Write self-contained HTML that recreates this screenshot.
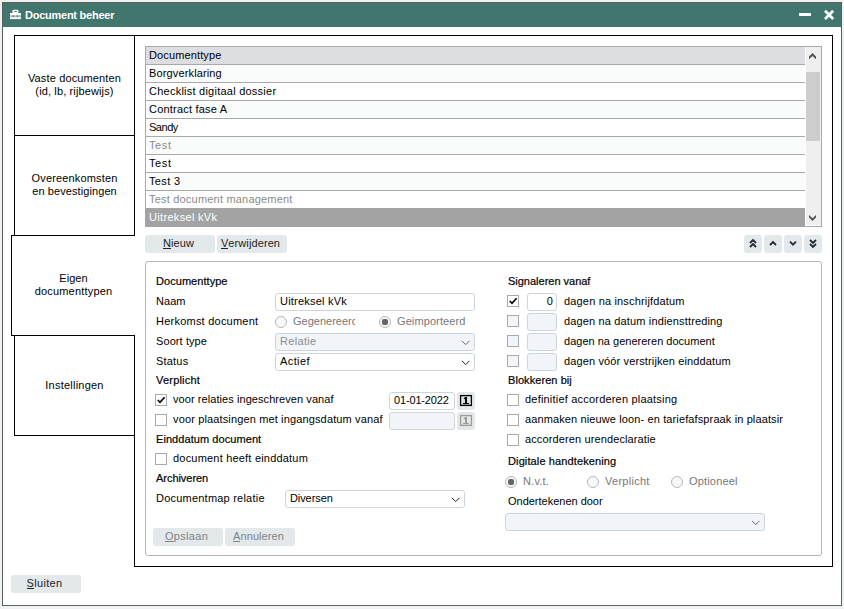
<!DOCTYPE html>
<html><head><meta charset="utf-8">
<style>
*{box-sizing:border-box;margin:0;padding:0}
html,body{width:844px;height:609px;overflow:hidden;background:#eef2f3}
body{position:relative;font-family:"Liberation Sans",sans-serif;font-size:11px;color:#000;letter-spacing:0.2px}
.a{position:absolute}
#win{left:2px;top:2px;width:840px;height:604px;border:1px solid #5e5e5e;background:#fff}
#title{left:3px;top:3px;width:838px;height:24px;background:#40766e}
#title .t{left:22px;top:5px;color:#fff;font-weight:bold;font-size:11px;letter-spacing:-0.25px;line-height:14px}
.tab{border:1px solid #000;background:#fff;text-align:center;display:flex;align-items:center;justify-content:center;line-height:13px;letter-spacing:0.15px;padding-bottom:2px}
#panel{left:134px;top:35px;width:699px;height:532px;border:1px solid #000}
.grid{left:145px;top:46px;width:677px;height:181px;border:1px solid #a9a9a9;background:#fff}
.row{position:absolute;left:0;width:659px;height:18px;border-bottom:1px solid #a9a9a9;line-height:17px;padding-left:3px;letter-spacing:0.28px}
.btn{position:absolute;background:#e3e8eb;border-radius:3px;height:18px;line-height:17px;text-align:center;color:#222;padding-right:3px}
.btn u{text-decoration:none;border-bottom:1px solid #222;line-height:10px;display:inline-block}
.row.hdr{background:#dcdee2}
.row.alt{background:#fafbfb}
.row.dis{color:#8a8a8a}
.row.sel{background:#a3a3a3;color:#fff;left:-1px;width:660px;height:19px;border-bottom:none;padding-left:4px;line-height:18px}
.sb{left:660px;top:0;width:15px;height:178px;background:#efefef}
.thumb{left:660px;top:25px;width:14px;height:69px;background:#cdcdcd}
.btn svg{display:block;margin-left:0}
.l{line-height:13px;white-space:nowrap}
.h{font-weight:normal;-webkit-text-stroke:0.22px #111;letter-spacing:0.15px}
.g{color:#777}
.cb{width:12px;height:12px;border:1px solid #a9a9a9;background:#fff}
.cb.dis{background:#f1f5f9}
.cb svg{position:absolute;left:0;top:0}
.rd{width:12px;height:12px;border:1px solid #b8b8b8;border-radius:50%;background:#f5f7f9}
.rd .dot{position:absolute;left:2px;top:2px;width:6px;height:6px;border-radius:2px;background:#666}
.inp{height:18px;border:1px solid #cdd5dc;border-radius:3px;background:#fff;padding-left:4px;line-height:14px;white-space:nowrap;overflow:hidden}
.inp.dis{background:#f1f5f9}
.btn.dis{color:#7f8489}
.btn.dis u{border-color:#7f8489}
</style></head><body>
<div class="a" id="win"></div>
<div class="a" id="title">
  <svg class="a" style="left:0;top:0" width="30" height="24" viewBox="0 0 30 24">
    <rect x="9.4" y="6.7" width="6.1" height="3.6" rx="1.2" fill="#fff"></rect>
    <rect x="11.3" y="7.9" width="2.5" height="1.1" rx="0.5" fill="#40766e"></rect>
    <rect x="7" y="10" width="11" height="2.5" fill="#fff"></rect>
    <rect x="7" y="12.5" width="11" height="1.7" fill="#fff" opacity="0.55"></rect>
    <rect x="9.7" y="12.3" width="1.1" height="2" fill="#40766e"></rect>
    <rect x="13.7" y="12.3" width="1.1" height="2" fill="#40766e"></rect>
    <rect x="7" y="14.2" width="11" height="1.9" fill="#fff"></rect>
  </svg>
  <div class="a t">Document beheer</div>
  <div class="a" style="left:796px;top:10px;width:12px;height:3px;background:#fff"></div>
  <svg class="a" style="left:819px;top:5px" width="14" height="14" viewBox="0 0 14 14"><path d="M3 2.8 L11.2 11 M11.2 2.8 L3 11" stroke="#fff" stroke-width="2.7"></path></svg>
</div>

<!-- tabs -->
<div class="a tab" style="left:14px;top:35px;width:121px;height:101px"><div><div style="letter-spacing: 0.14px;">Vaste documenten</div><div style="letter-spacing: 0.13px;">(id, lb, rijbewijs)</div></div></div>
<div class="a tab" style="left:14px;top:135px;width:121px;height:101px"><div><div style="letter-spacing: 0.15px;">Overeenkomsten</div><div style="letter-spacing: 0.09px;">en bevestigingen</div></div></div>
<div class="a" id="panel"></div>
<div class="a tab" style="left:11px;top:235px;width:124px;height:101px;border-right:none"><div><div style="letter-spacing: 0.05px;">Eigen</div><div style="letter-spacing: 0.19px;">documenttypen</div></div></div>
<div class="a tab" style="left:14px;top:335px;width:121px;height:101px;padding-bottom:0"><div><div style="letter-spacing: 0.23px;">Instellingen</div></div></div>
<!-- grid -->
<div class="a grid">
<div class="row hdr" style="top: 0px; letter-spacing: 0.13px;">Documenttype</div>
<div class="row alt" style="top: 18px; letter-spacing: 0.14px;">Borgverklaring</div>
<div class="row" style="top: 36px; letter-spacing: 0.24px;">Checklist digitaal dossier</div>
<div class="row alt" style="top: 54px; letter-spacing: 0.2px;">Contract fase A</div>
<div class="row" style="top: 72px; letter-spacing: -0.47px;">Sandy</div>
<div class="row alt dis" style="top: 90px; letter-spacing: 0.61px;">Test</div>
<div class="row" style="top: 108px; letter-spacing: 0.61px;">Test</div>
<div class="row alt" style="top: 126px; letter-spacing: 0.36px;">Test 3</div>
<div class="row dis" style="top: 144px; letter-spacing: 0.2px;">Test document management</div>
<div class="row sel" style="top: 161px; letter-spacing: 0.32px;">Uitreksel kVk</div>
<div class="a sb"></div><div class="a thumb"></div>
<svg class="a" style="left:660px;top:0" width="14" height="14" viewBox="0 0 14 14"><path d="M6.5 5.9 L10 9.4 V12.2 L6.5 9 L3 12.2 V9.4z" fill="#555"></path></svg>
<svg class="a" style="left:660px;top:164px" width="14" height="14" viewBox="0 0 14 14"><path d="M6.5 10.1 L10 6.6 V4.1 L6.5 7.3 L3 4.1 V6.6z" fill="#555"></path></svg>
</div>
<!-- grid buttons -->
<div class="btn" style="left: 145px; top: 235px; width: 70px; letter-spacing: 0.1px;"><u>N</u>ieuw</div>
<div class="btn" style="left: 217px; top: 235px; width: 70px; letter-spacing: 0.1px;"><u>V</u>erwijderen</div>
<div class="btn" style="left:744px;top:235px;width:18px"><svg width="18" height="18" viewBox="0 0 18 18"><path d="M6 8 L9 5 L12 8 M6 12 L9 9 L12 12" fill="none" stroke="#222b33" stroke-width="1.8"></path></svg></div>
<div class="btn" style="left:764px;top:235px;width:18px"><svg width="18" height="18" viewBox="0 0 18 18"><path d="M6 10 L9 7 L12 10" fill="none" stroke="#222b33" stroke-width="1.8"></path></svg></div>
<div class="btn" style="left:784px;top:235px;width:18px"><svg width="18" height="18" viewBox="0 0 18 18"><path d="M6 6.7 L9 9.7 L12 6.7" fill="none" stroke="#222b33" stroke-width="1.8"></path></svg></div>
<div class="btn" style="left:804px;top:235px;width:18px"><svg width="18" height="18" viewBox="0 0 18 18"><path d="M6 5 L9 8 L12 5 M6 9 L9 12 L12 9" fill="none" stroke="#222b33" stroke-width="1.8"></path></svg></div>

<!-- form panel -->
<div class="a" style="left:145px;top:261px;width:677px;height:295px;border:1px solid #b5b5b5;border-radius:3px"></div>
<div class="btn" style="left: 11px; top: 575px; width: 70px; letter-spacing: 0.32px;"><u>S</u>luiten</div>

<!-- form -->
<div class="a l h" style="left: 156px; top: 275px; letter-spacing: 0.05px;">Documenttype</div>
<div class="a l" style="left: 156px; top: 295px; letter-spacing: 0.06px;">Naam</div>
<div class="a inp" style="left: 275px; top: 293px; width: 200px; letter-spacing: 0.21px;">Uitreksel kVk</div>
<div class="a l" style="left: 156px; top: 315px; letter-spacing: 0.23px;">Herkomst document</div>
<div class="a rd" style="left:275px;top:316px"></div>
<div class="a l g" style="left:293px;top:315px"><span style="display:inline-block;width:62px;overflow:hidden;white-space:nowrap;vertical-align:top;letter-spacing:0px">Gegenereerd</span></div>
<div class="a rd" style="left:379px;top:316px"><div class="dot"></div></div>
<div class="a l g" style="left: 397px; top: 315px; letter-spacing: 0.1px;">Geimporteerd</div>
<div class="a l" style="left: 156px; top: 335px; letter-spacing: 0.09px;">Soort type</div>
<div class="a inp dis" style="left: 275px; top: 333px; width: 200px; color: rgb(140, 140, 140); letter-spacing: 0.33px;">Relatie<svg class="a" style="right:3px;top:5px" width="12" height="8" viewBox="0 0 12 8"><path d="M3 1.9 L6.7 5.6 L10.4 1.9" fill="none" stroke="#666" stroke-width="1"></path></svg></div>
<div class="a l" style="left: 156px; top: 355px; letter-spacing: 0.2px;">Status</div>
<div class="a inp" style="left: 275px; top: 353px; width: 200px; letter-spacing: 0.4px;">Actief<svg class="a" style="right:3px;top:5px" width="12" height="8" viewBox="0 0 12 8"><path d="M3 1.9 L6.7 5.6 L10.4 1.9" fill="none" stroke="#222" stroke-width="1"></path></svg></div>
<div class="a l h" style="left: 156px; top: 374px; letter-spacing: 0.21px;">Verplicht</div>
<div class="a cb" style="left:155px;top:394px"><svg width="10" height="10" viewBox="0 0 10 10"><path d="M1.8 5 L4 7.3 L8.6 2.2" fill="none" stroke="#000" stroke-width="1.7"></path></svg></div>
<div class="a l" style="left: 173px; top: 393px; letter-spacing: 0.07px;">voor relaties ingeschreven vanaf</div>
<div class="a inp" style="left: 389px; top: 392px; width: 66px; letter-spacing: -0.16px;">01-01-2022</div>
<div class="btn" style="left:457px;top:392px;width:18px"><svg width="18" height="18" viewBox="0 0 18 18"><rect x="3.6" y="3.6" width="10.8" height="9.8" fill="#d9d9d9" stroke="#000" stroke-width="1.3"></rect><path d="M5 5.2v7M7 5.2v7M11 5.2v7M13 5.2v7" stroke="#fff" stroke-width="0.6" stroke-dasharray="0.8 1.2"></path><rect x="8" y="5" width="2" height="6" fill="#000"></rect><path d="M6.6 6.9 L8 5 L8.4 7.2z" fill="#000"></path><rect x="6" y="11" width="6" height="1.1" fill="#000"></rect></svg></div>
<div class="a cb" style="left:155px;top:414px"></div>
<div class="a l" style="left: 173px; top: 413px; letter-spacing: 0.14px;">voor plaatsingen met ingangsdatum vanaf</div>
<div class="a inp dis" style="left:389px;top:412px;width:66px"></div>
<div class="btn" style="left:457px;top:412px;width:18px"><svg width="18" height="18" viewBox="0 0 18 18"><rect x="3.6" y="3.6" width="10.8" height="9.8" fill="#e4e4e4" stroke="#9a9a9a" stroke-width="1.3"></rect><path d="M5 5.2v7M7 5.2v7M11 5.2v7M13 5.2v7" stroke="#fff" stroke-width="0.6" stroke-dasharray="0.8 1.2"></path><rect x="8" y="5" width="2" height="6" fill="#9a9a9a"></rect><path d="M6.6 6.9 L8 5 L8.4 7.2z" fill="#9a9a9a"></path><rect x="6" y="11" width="6" height="1.1" fill="#9a9a9a"></rect></svg></div>
<div class="a l h" style="left: 156px; top: 433px; letter-spacing: 0.07px;">Einddatum document</div>
<div class="a cb" style="left:155px;top:453px"></div>
<div class="a l" style="left: 173px; top: 452px; letter-spacing: 0.2px;">document heeft einddatum</div>
<div class="a l h" style="left: 156px; top: 472px; letter-spacing: -0.04px;">Archiveren</div>
<div class="a l" style="left: 156px; top: 492px; letter-spacing: 0.22px;">Documentmap relatie</div>
<div class="a inp" style="left: 285px; top: 490px; width: 180px; letter-spacing: -0.09px;">Diversen<svg class="a" style="right:3px;top:5px" width="12" height="8" viewBox="0 0 12 8"><path d="M3 1.9 L6.7 5.6 L10.4 1.9" fill="none" stroke="#222" stroke-width="1"></path></svg></div>
<div class="btn dis" style="left: 153px; top: 528px; width: 70px; letter-spacing: 0.31px;"><u>O</u>pslaan</div>
<div class="btn dis" style="left: 225px; top: 528px; width: 70px; letter-spacing: 0.08px;"><u>A</u>nnuleren</div>
<div class="a l h" style="left: 508px; top: 275px; letter-spacing: -0.01px;">Signaleren vanaf</div>
<div class="a cb" style="left:507px;top:295px"><svg width="10" height="10" viewBox="0 0 10 10"><path d="M1.8 5 L4 7.3 L8.6 2.2" fill="none" stroke="#000" stroke-width="1.7"></path></svg></div>
<div class="a inp" style="left:527px;top:293px;width:30px;text-align:right;padding-right:3px">0</div>
<div class="a l" style="left: 564px; top: 295px; letter-spacing: 0.17px;">dagen na inschrijfdatum</div>
<div class="a cb dis" style="left:507px;top:315px"></div>
<div class="a inp dis" style="left:527px;top:313px;width:30px;text-align:right;padding-right:5px"></div>
<div class="a l" style="left: 564px; top: 315px; letter-spacing: 0.15px;">dagen na datum indiensttreding</div>
<div class="a cb dis" style="left:507px;top:335px"></div>
<div class="a inp dis" style="left:527px;top:333px;width:30px;text-align:right;padding-right:5px"></div>
<div class="a l" style="left: 564px; top: 335px; letter-spacing: 0.01px;">dagen na genereren document</div>
<div class="a cb dis" style="left:507px;top:355px"></div>
<div class="a inp dis" style="left:527px;top:353px;width:30px;text-align:right;padding-right:5px"></div>
<div class="a l" style="left: 564px; top: 355px; letter-spacing: 0.13px;">dagen vóór verstrijken einddatum</div>
<div class="a l h" style="left: 508px; top: 374px; letter-spacing: 0.07px;">Blokkeren bij</div>
<div class="a cb" style="left:507px;top:394px"></div>
<div class="a l" style="left: 525px; top: 393px; letter-spacing: 0.2px;">definitief accorderen plaatsing</div>
<div class="a cb" style="left:507px;top:414px"></div>
<div class="a l" style="left:525px;top:413px"><span style="display:inline-block;width:258px;overflow:hidden;white-space:nowrap;vertical-align:top;letter-spacing:0.12px">aanmaken nieuwe loon- en tariefafspraak in plaatsing</span></div>
<div class="a cb" style="left:507px;top:434px"></div>
<div class="a l" style="left: 525px; top: 433px; letter-spacing: 0.12px;">accorderen urendeclaratie</div>
<div class="a l h" style="left: 508px; top: 455px; letter-spacing: 0.12px;">Digitale handtekening</div>
<div class="a rd" style="left:505px;top:476px"><div class="dot"></div></div>
<div class="a l g" style="left: 523px; top: 475px; letter-spacing: 0.2px;">N.v.t.</div>
<div class="a rd" style="left:587px;top:476px"></div>
<div class="a l g" style="left: 605px; top: 475px; letter-spacing: 0.28px;">Verplicht</div>
<div class="a rd" style="left:671px;top:476px"></div>
<div class="a l g" style="left: 689px; top: 475px; letter-spacing: 0.17px;">Optioneel</div>
<div class="a l" style="left: 508px; top: 495px; letter-spacing: -0.01px;">Ondertekenen door</div>
<div class="a inp dis" style="left:505px;top:513px;width:260px"><svg class="a" style="right:3px;top:5px" width="12" height="8" viewBox="0 0 12 8"><path d="M3 1.9 L6.7 5.6 L10.4 1.9" fill="none" stroke="#666" stroke-width="1"></path></svg></div>

</body></html>
